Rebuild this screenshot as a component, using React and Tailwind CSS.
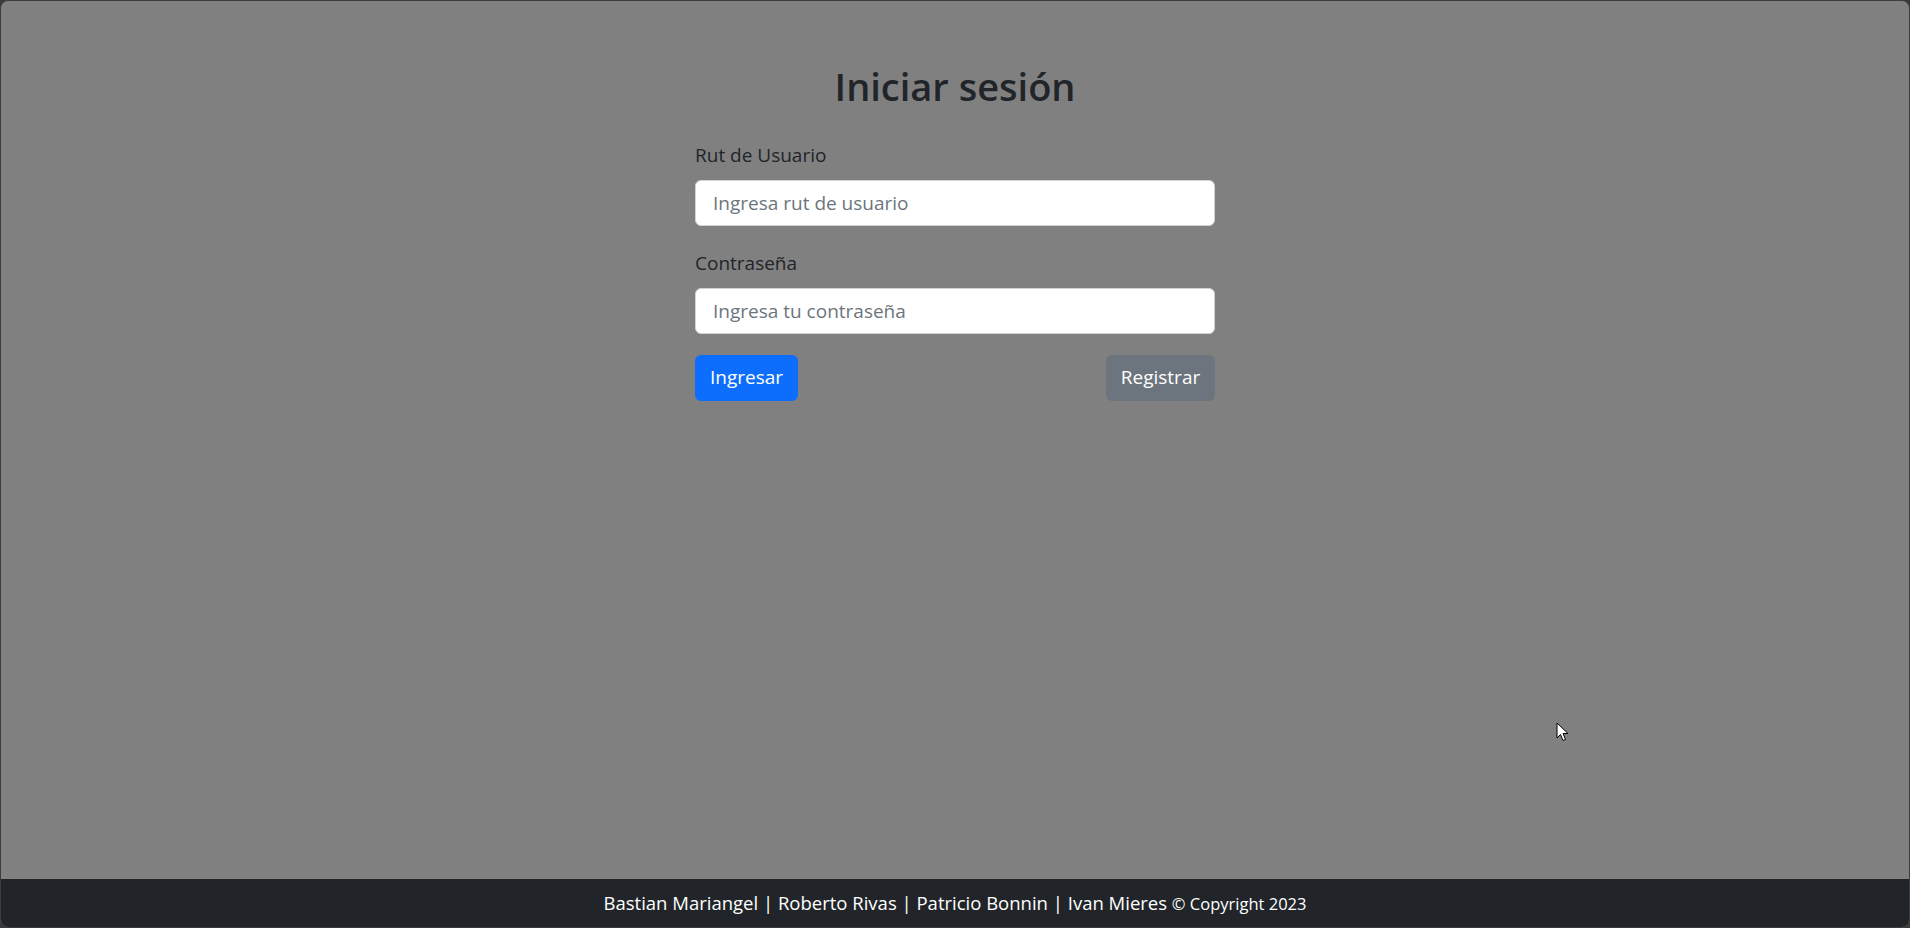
export default function App() {
  const font = { fontFamily: '"Open Sans", "Noto Sans", sans-serif' }

  return (
    <div className="h-[928px] w-full bg-[#3a3a3a]" style={font}>
      <div className="h-full w-full rounded-lg border border-[#3c3c3c] bg-[#808080] overflow-hidden flex flex-col relative">
        {/* Login form */}
        <main className="flex-1">
          <div className="w-[520px] mx-auto pt-[63px]">
            <h2 className="text-center text-[38px] leading-[1.2] font-semibold text-[#212529]">
              Iniciar sesión
            </h2>

            <form className="mt-[31px]" onSubmit={(e) => e.preventDefault()}>
              <div className="mb-[23px]">
                <label className="block mb-[10px] text-[19px] leading-[29px] text-[#212529]">
                  Rut de Usuario
                </label>
                <input
                  type="text"
                  placeholder="Ingresa rut de usuario"
                  className="block w-full h-[46px] px-[17px] rounded-[6px] border border-[#ced4da] bg-white text-[19px] text-[#212529] placeholder:text-[#6c757d] outline-none"
                />
              </div>

              <div className="mb-[21px]">
                <label className="block mb-[10px] text-[19px] leading-[29px] text-[#212529]">
                  Contraseña
                </label>
                <input
                  type="password"
                  placeholder="Ingresa tu contraseña"
                  className="block w-full h-[46px] px-[17px] rounded-[6px] border border-[#ced4da] bg-white text-[19px] text-[#212529] placeholder:text-[#6c757d] outline-none"
                />
              </div>

              <div className="flex justify-between">
                <button className="h-[46px] w-[103px] rounded-[6px] bg-[#0d6efd] text-white text-[19px]">
                  Ingresar
                </button>
                <button type="button" className="h-[46px] w-[109px] rounded-[6px] bg-[#6c757d] text-white text-[19px]">
                  Registrar
                </button>
              </div>
            </form>
          </div>
        </main>

        {/* Footer */}
        <footer className="h-[48px] shrink-0 bg-[#212529] flex items-center justify-center text-white text-[18.5px]">
          <span>
            Bastian Mariangel | Roberto Rivas | Patricio Bonnin | Ivan Mieres{' '}
            <span className="text-[16.5px]">© Copyright 2023</span>
          </span>
        </footer>

        {/* mouse pointer */}
        <svg className="absolute left-[1555px] top-[721px]" width="13" height="20" viewBox="0 0 13 20">
          <path d="M1 1 L1 16 L4.5 12.5 L7 18.5 L9.5 17.5 L7 11.5 L12 11.5 Z" fill="#fff" stroke="#000" strokeWidth="1" strokeLinejoin="round" />
        </svg>
      </div>
    </div>
  )
}
